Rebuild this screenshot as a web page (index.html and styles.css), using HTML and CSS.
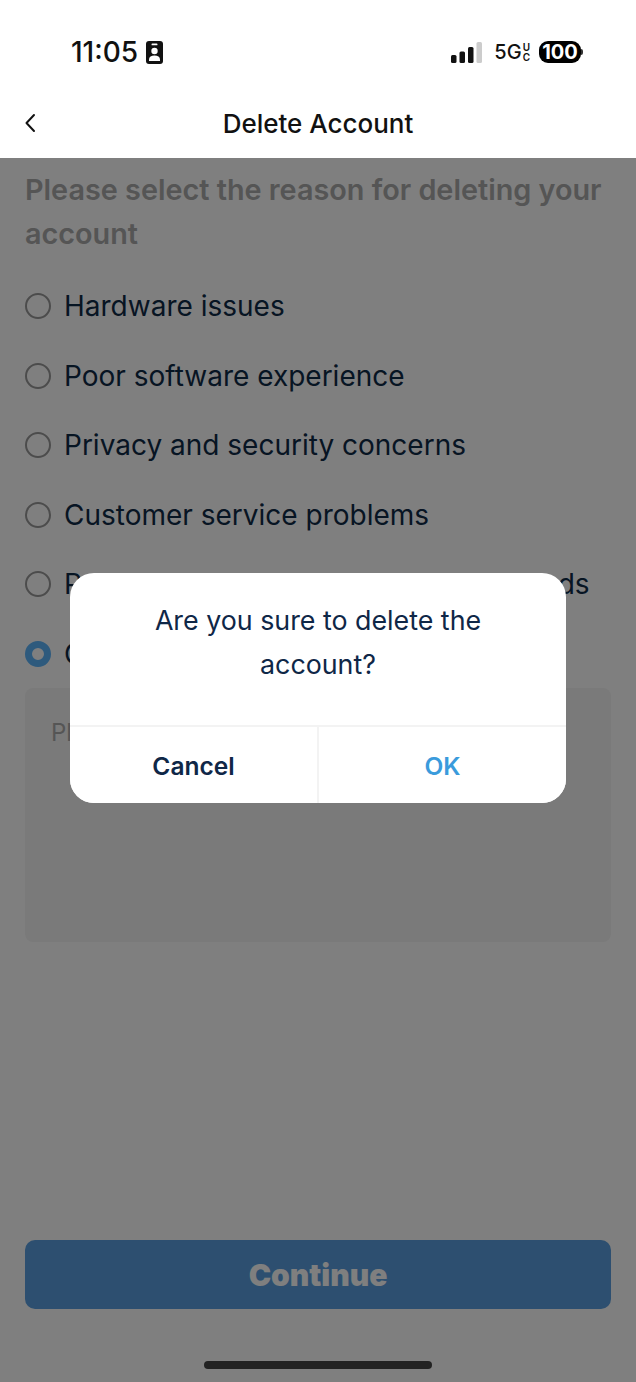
FILE: index.html
```html
<!DOCTYPE html>
<html lang="en">
<head>
    <meta charset="UTF-8">
    <meta name="viewport" content="width=device-width, initial-scale=1.0">
    <title>Delete Account</title>
    <link rel="stylesheet" href="styles.css">
</head>
<body>
    <div class="page">
        <div class="top">
            <div class="status">
                <div class="status-left">
                    <span class="time">11:05</span>
                    <svg class="badge" width="17" height="23" viewBox="0 0 17 23">
                        <rect x="0" y="0" width="17" height="23" rx="3" fill="#111"/>
                        <rect x="5.500" y="2.500" width="6" height="1.800" rx="0.900" fill="#fff"/>
                        <circle cx="8.500" cy="10" r="3.200" fill="#fff"/>
                        <path d="M3 20v-1.600c0-2.600 2.200-4 5.500-4s5.500 1.400 5.500 4V20z" fill="#fff"/>
                    </svg>
                </div>
                <div class="status-right">
                    <svg width="32" height="21" viewBox="0 0 32 21">
                        <rect x="0" y="13" width="5.500" height="8" rx="1.500" fill="#111"/>
                        <rect x="8.500" y="9.500" width="5.500" height="11.500" rx="1.500" fill="#111"/>
                        <rect x="17" y="5" width="5.500" height="16" rx="1.500" fill="#111"/>
                        <rect x="25.500" y="0" width="5.500" height="21" rx="1.500" fill="#ccc"/>
                    </svg>
                    <span class="net">5G<span class="net-uc"><span>U</span><span>C</span></span></span>
                    <span class="battery">100</span>
                    <span class="battery-tip"></span>
                </div>
            </div>
            <div class="nav">
                <svg class="back" width="12" height="20" viewBox="0 0 12 20">
                    <path d="M10 2 2.500 10 10 18" fill="none" stroke="#111" stroke-width="2" stroke-linecap="round" stroke-linejoin="round"/>
                </svg>
                <span class="nav-title">Delete Account</span>
            </div>
        </div>

        <div class="content">
            <h1 class="heading">Please select the reason for deleting your account</h1>
            <ul class="reasons">
                <li class="reason"><span class="radio"></span>Hardware issues</li>
                <li class="reason"><span class="radio"></span>Poor software experience</li>
                <li class="reason"><span class="radio"></span>Privacy and security concerns</li>
                <li class="reason"><span class="radio"></span>Customer service problems</li>
                <li class="reason"><span class="radio"></span>Product does not meet my actual needs</li>
                <li class="reason"><span class="radio radio-on"></span>Other</li>
            </ul>
            <div class="note">Please enter the reason</div>
            <div class="bottom">
                <button class="continue">Continue</button>
            </div>
        </div>

        <div class="overlay">
            <div class="dialog">
                <p class="dialog-text">Are you sure to delete the account?</p>
                <div class="dialog-btns">
                    <button class="dialog-btn cancel">Cancel</button>
                    <button class="dialog-btn ok">OK</button>
                </div>
            </div>
        </div>

        <div class="home-bar"></div>
    </div>
</body>
</html>
```

FILE: styles.css
```css
*{
    margin: 0;
    padding: 0;
    box-sizing: border-box;
}
body{
    font-family: Inter, "Liberation Sans", sans-serif;
    background-color: #fff;
}
.page{
    position: relative;
    width: 636px;
    height: 1382px;
    display: flex;
    flex-direction: column;
    overflow: hidden;
}
/* header stays above the dim layer */
.top{
    position: relative;
    z-index: 2;
    height: 158px;
    background-color: #fff;
}
.status{
    height: 90px;
    display: flex;
    justify-content: space-between;
    align-items: center;
    padding: 14px 53px 0 71px;
}
.status-left{
    display: flex;
    align-items: center;
    gap: 8px;
}
.time{
    font-size: 28px;
    font-weight: 500;
    color: #111;
}
.status-right{
    display: flex;
    align-items: center;
}
.net{
    display: flex;
    align-items: center;
    margin-left: 11px;
    font-size: 20px;
    font-weight: 500;
    color: #111;
}
.net-uc{
    display: flex;
    flex-direction: column;
    margin-left: 1px;
    font-size: 10px;
    font-weight: 600;
    line-height: 10px;
}
.battery{
    margin-left: 9px;
    width: 42px;
    height: 22px;
    border-radius: 9px;
    background-color: #000;
    color: #fff;
    font-size: 20px;
    font-weight: 700;
    line-height: 22px;
    text-align: center;
}
.battery-tip{
    width: 2px;
    height: 6px;
    border-radius: 0 2px 2px 0;
    background-color: #333;
}
.nav{
    position: relative;
    height: 68px;
    display: flex;
    align-items: center;
    justify-content: center;
    padding-bottom: 1px;
}
.back{
    position: absolute;
    left: 24px;
    top: 23px;
}
.nav-title{
    font-size: 26px;
    font-weight: 500;
    color: #111;
}
.content{
    flex: 1;
    display: flex;
    flex-direction: column;
    padding: 10px 25px 0;
}
.heading{
    font-size: 28.800px;
    font-weight: 600;
    line-height: 44px;
    color: #aaa;
    margin-bottom: 15.500px;
}
.reasons{
    list-style: none;
}
.reason{
    height: 69.500px;
    display: flex;
    align-items: center;
    gap: 13px;
    font-size: 28px;
    white-space: nowrap;
    color: #0f2a47;
}
.radio{
    width: 26px;
    height: 26px;
    flex: none;
    border: 2px solid #999;
    border-radius: 50%;
    background-color: #fff;
}
.radio-on{
    border: 7px solid #5cb4fa;
}
.note{
    height: 254px;
    margin-top: -0.500px;
    padding: 30px 26px;
    border-radius: 8px;
    background-color: #f5f5f5;
    font-size: 24px;
    color: #aaa;
}
.bottom{
    margin-top: auto;
    padding-bottom: 73px;
}
.continue{
    display: block;
    width: 100%;
    height: 69px;
    border: 0;
    border-radius: 10px;
    background-color: #5a9fe0;
    font-family: inherit;
    font-size: 30px;
    font-weight: 900;
    color: #fff;
}
.overlay{
    position: absolute;
    inset: 0;
    z-index: 1;
    display: flex;
    align-items: center;
    justify-content: center;
    padding-bottom: 6px;
    background-color: rgba(0, 0, 0, 0.5);
}
.dialog{
    width: 496px;
    height: 230px;
    display: flex;
    flex-direction: column;
    border-radius: 24px;
    background-color: #fff;
    overflow: hidden;
}
.dialog-text{
    flex: 1;
    padding: 25px 60px 0;
    font-size: 26.800px;
    line-height: 44px;
    text-align: center;
    color: #0f2747;
}
.dialog-btns{
    height: 78px;
    display: flex;
    border-top: 2px solid #f3f3f3;
}
.dialog-btn{
    flex: 1;
    padding-top: 1px;
    border: 0;
    background-color: #fff;
    font-family: inherit;
    font-size: 24.500px;
    font-weight: 600;
}
.cancel{
    color: #0f2747;
    border-right: 2px solid #f3f3f3;
}
.ok{
    color: #3a9bdc;
}
.home-bar{
    position: absolute;
    z-index: 3;
    left: 204px;
    bottom: 13px;
    width: 228px;
    height: 8px;
    border-radius: 4px;
    background-color: #222;
}
```
